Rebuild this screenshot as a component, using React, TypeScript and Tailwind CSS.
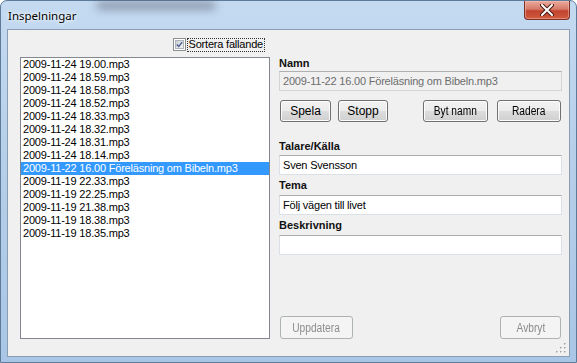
import React from 'react';

const ui = { fontFamily: '"Liberation Sans", Arial, sans-serif' };

const files = [
  '2009-11-24 19.00.mp3',
  '2009-11-24 18.59.mp3',
  '2009-11-24 18.58.mp3',
  '2009-11-24 18.52.mp3',
  '2009-11-24 18.33.mp3',
  '2009-11-24 18.32.mp3',
  '2009-11-24 18.31.mp3',
  '2009-11-24 18.14.mp3',
  '2009-11-22 16.00 Föreläsning om Bibeln.mp3',
  '2009-11-19 22.33.mp3',
  '2009-11-19 22.25.mp3',
  '2009-11-19 21.38.mp3',
  '2009-11-19 18.38.mp3',
  '2009-11-19 18.35.mp3',
];
const SELECTED = 8;

// --- win7 style push button ---
const Button = ({ label, w, disabled = false, narrow = false }: { label: string; w: string; disabled?: boolean; narrow?: boolean }) => (
  <button
    className={`${w} h-[22px] rounded-[3px] border text-[12px] leading-none flex items-center justify-center ${
      disabled
        ? 'border-[#adb2b5] bg-[#f4f4f4] text-[#8d8d8d]'
        : 'border-[#707070] text-black bg-[linear-gradient(#f2f2f2_0%,#ebebeb_50%,#dddddd_50%,#cfcfcf_100%)] shadow-[inset_0_0_0_1px_#fcfcfc]'
    }`}
  >
    <span className={`inline-block whitespace-nowrap ${narrow ? 'scale-x-[0.85]' : ''}`}>{label}</span>
  </button>
);

const Label = ({ text, className = '' }: { text: string; className?: string }) => (
  <div className={`h-[13px] text-[11px] leading-[13px] font-bold text-[#111] ${className}`}>{text}</div>
);

const TextBox = ({ value, readOnly = false, className = '' }: { value: string; readOnly?: boolean; className?: string }) => (
  <div
    className={`w-[283px] h-[20px] border px-[3px] flex items-center text-[11px] tracking-[-0.2px] ${
      readOnly
        ? 'bg-[#f0f0f0] text-[#6d6d6d] border-[#d4d4d4] border-t-[#b0b0b0]'
        : 'bg-white text-black border-[#dbdfe6] border-t-[#abadb3]'
    } ${className}`}
  >
    {value}
  </div>
);

const CloseButton = () => (
  <div className="w-[46px] h-[19px] rounded-b-[4px] border border-t-0 border-[#7a3127] bg-[linear-gradient(#e9a99c_0%,#d67b69_45%,#c2442f_55%,#cf5a3f_100%)] shadow-[inset_0_0_0_1px_rgba(255,200,190,0.45)] flex items-center justify-center">
    <svg width="14" height="12" viewBox="0 0 14 12">
      <path d="M2 1 L12 11 M12 1 L2 11" stroke="#4a1a12" strokeWidth="4" strokeLinecap="round" />
      <path d="M2 1 L12 11 M12 1 L2 11" stroke="#ffffff" strokeWidth="2" strokeLinecap="round" />
    </svg>
  </div>
);

const CheckBox = () => (
  <div className="w-[13px] h-[13px] border border-[#8e8f8f] bg-white p-[1px]">
    <div className="w-full h-full border border-[#aeb3b9] bg-[linear-gradient(135deg,#cbcfd5,#f4f4f4)] flex items-center justify-center">
      <svg width="9" height="9" viewBox="0 0 9 9">
        <path d="M1 4.5 L3.5 7 L8 1.5" fill="none" stroke="#4a5f8f" strokeWidth="1.8" />
      </svg>
    </div>
  </div>
);

const Grip = () => (
  <svg width="10" height="10" viewBox="0 0 10 10" className="absolute right-[3px] bottom-[3px]">
    {[
      [8, 0], [8, 4], [4, 4], [8, 8], [4, 8], [0, 8],
    ].map(([x, y], i) => (
      <g key={i}>
        <rect x={x + 1} y={y + 1} width="1.5" height="1.5" fill="#ffffff" />
        <rect x={x} y={y} width="1.5" height="1.5" fill="#a0a0a0" />
      </g>
    ))}
  </svg>
);

export default function App() {
  return (
    <div className="w-[577px] h-[363px] overflow-hidden bg-white" style={ui}>
      <div className="relative w-[577px] h-[363px] rounded-t-[7px] border border-[#5d7a98] bg-[linear-gradient(180deg,#c4daf1_0%,#b7d0ea_40%,#a9c6e6_100%)] flex flex-col">
        {/* blurred desktop showing through the glass */}
        <div className="absolute left-[95px] top-0 w-[120px] h-[9px] rounded-full bg-[#5a6070] blur-[4px] opacity-50 pointer-events-none" />

        {/* title bar */}
        <div className="relative h-[28px] flex items-start justify-between">
          <div
            className="pl-[7px] pt-[8px] text-[11.5px] leading-[14px] text-black [text-shadow:0_0_6px_#ffffff,0_0_3px_#ffffff]"
            style={{ fontFamily: '"Noto Sans", "Open Sans", sans-serif' }}
          >
            Inspelningar
          </div>
          <div className="mr-[6px]">
            <CloseButton />
          </div>
        </div>

        {/* client area */}
        <div className="relative mx-[6px] h-[328px] border border-[#8b9db3] bg-[#f0f0f0] flex pl-[12px]">
          {/* left: list */}
          <div className="w-[250px] flex flex-col pt-[8px]">
            <div className="h-[13px] flex items-center justify-end pr-[5px] gap-[1px]">
              <CheckBox />
              <div className="h-[14px] px-[1px] border border-dotted border-[#333] flex items-center text-[11px] tracking-[-0.2px] text-black leading-none">
                Sortera fallande
              </div>
            </div>
            <div className="mt-[6px] h-[282px] border border-[#828790] bg-white">
              {files.map((f, i) => (
                <div
                  key={f}
                  className={`h-[13px] leading-[13px] pl-[2px] text-[11px] tracking-[-0.2px] whitespace-nowrap ${
                    i === SELECTED ? 'bg-[#3399ff] text-white' : 'text-black'
                  }`}
                >
                  {f}
                </div>
              ))}
            </div>
          </div>

          {/* right: details */}
          <div className="ml-[9px] w-[283px] flex flex-col pt-[27px] pb-[17px]">
            <Label text="Namn" />
            <TextBox value="2009-11-22 16.00 Föreläsning om Bibeln.mp3" readOnly className="mt-[1px]" />
            <div className="mt-[9px] pl-[1px] flex">
              <Button label="Spela" w="w-[51px]" />
              <Button label="Stopp" w="w-[50px] ml-[7px]" />
              <Button label="Byt namn" w="w-[65px] ml-[35px]" narrow />
              <Button label="Radera" w="w-[64px] ml-[9px]" narrow />
            </div>
            <Label text="Talare/Källa" className="mt-[18px]" />
            <TextBox value="Sven Svensson" className="mt-[2px]" />
            <Label text="Tema" className="mt-[4px]" />
            <TextBox value="Följ vägen till livet" className="mt-[3px]" />
            <Label text="Beskrivning" className="mt-[4px]" />
            <TextBox value="" className="mt-[3px]" />
            <div className="mt-auto pl-[1px] flex justify-between pr-[1px]">
              <Button label="Uppdatera" w="w-[73px] h-[23px]" disabled narrow />
              <Button label="Avbryt" w="w-[61px] h-[23px]" disabled narrow />
            </div>
          </div>
          <Grip />
        </div>
      </div>
    </div>
  );
}
